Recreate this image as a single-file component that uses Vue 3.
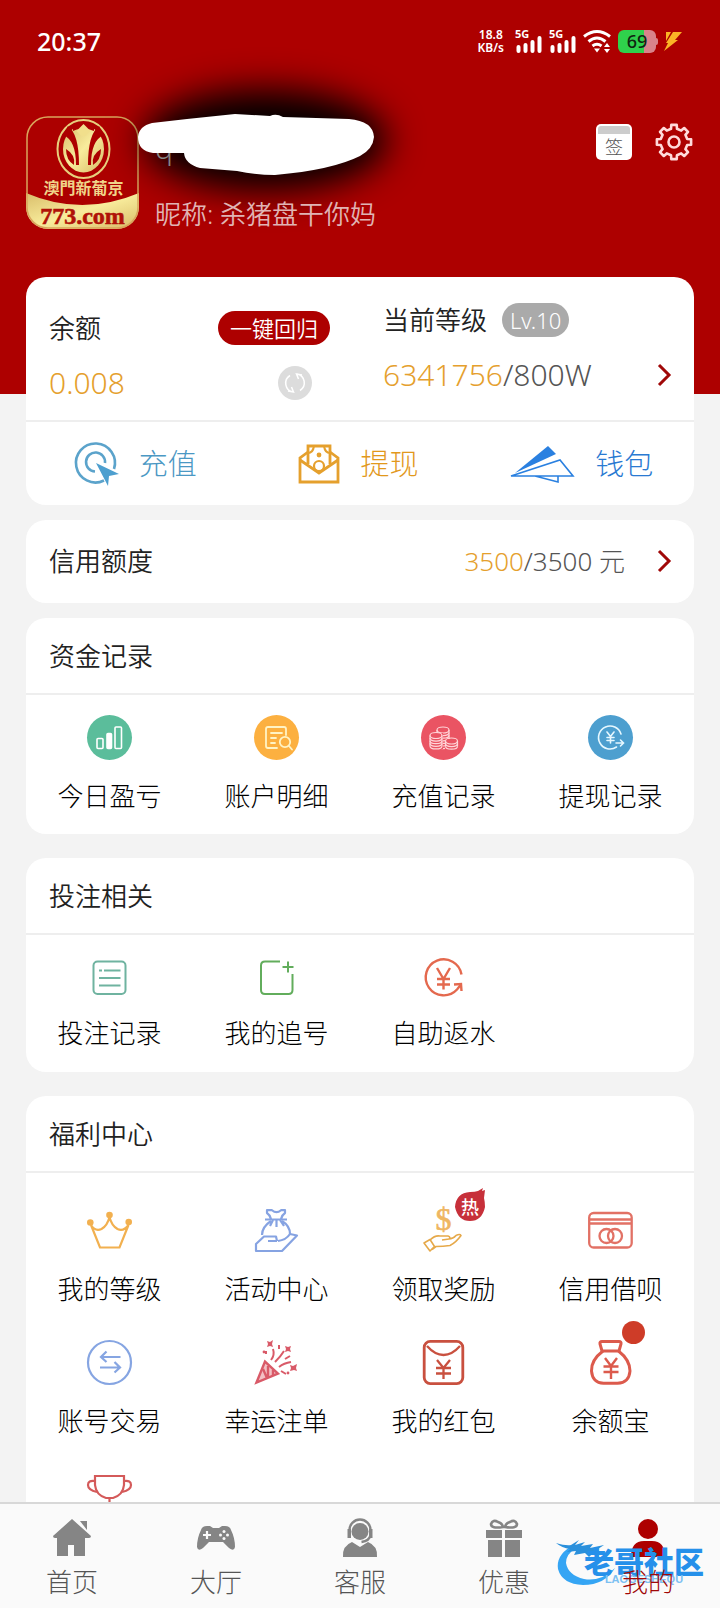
<script setup>
const gear = (() => {
  const pts = []
  const at = (deg, r) => {
    const a = (deg * Math.PI) / 180
    pts.push(`${(19 + r * Math.sin(a)).toFixed(1)} ${(19 - r * Math.cos(a)).toFixed(1)}`)
  }
  for (let i = 0; i < 8; i++) {
    const d = i * 45
    at(d - 13, 13.5)
    at(d - 9, 17.3)
    at(d + 9, 17.3)
    at(d + 13, 13.5)
  }
  return `M${pts.join('L')}Z`
})()

const coin = (x, y, n) => {
  let s = `<ellipse cx="${x}" cy="${y}" rx="6" ry="3"/>`
  for (let i = 1; i <= n; i++) s += `<path d="M${x - 6} ${y + i * 2.6}c0 4 12 4 12 0"/>`
  return s + `<path d="M${x - 6} ${y}v${n * 2.6}M${x + 6} ${y}v${n * 2.6}"/>`
}

const icons = {
  profit: `<circle cx="22.5" cy="22.5" r="22.5" fill="#5bbd9b"/><g fill="none" stroke="#fff" stroke-width="1.6"><rect x="10" y="23.5" width="6" height="10" rx="1"/><rect x="20" y="18.5" width="4.500" height="15" rx="1" fill="#fff"/><rect x="28" y="12" width="6.500" height="21.500" rx="1"/></g>`,
  detail: `<circle cx="22.5" cy="22.5" r="22.5" fill="#fcb040"/><g fill="none" stroke="#fff3c4" stroke-width="1.8" stroke-linecap="round"><path d="M32 20v-6q0-2-2-2H14q-2 0-2 2v17q0 2 2 2h9"/><path d="M17 18h11M17 23h5M17 28h4"/><circle cx="31" cy="27" r="5.200"/><path d="M35 31l3 3.500"/></g>`,
  recharge: `<circle cx="22.5" cy="22.5" r="22.5" fill="#ea5463"/><g fill="none" stroke="#ffd5d8" stroke-width="1.2">${coin(22, 15, 6)}<path fill="#ea5463" stroke="none" d="M8 18h14v16H8zM24 24h13v10H24z"/>${coin(15, 20.5, 4)}${coin(30.5, 26, 2)}</g>`,
  withdraw: `<circle cx="22.5" cy="22.5" r="22.5" fill="#4d9fcf"/><g fill="none" stroke="#e6f8ff" stroke-width="1.600" stroke-linecap="round"><path d="M33 19a11.500 11.500 0 1 0-4.500 13"/><path d="M19 17l3.500 4.500L26 17M19 22.500h7M19 25.500h7M22.500 21.500V28"/><path d="M28 28h7.500M32.500 25l3 3-3 3"/></g>`,
  list: `<g fill="none" stroke="#6fb3a0" stroke-width="2"><rect x="6.500" y="6.500" width="32" height="32.500" rx="4"/><path d="M12 15.500h3M17 15.500h16.500M12 23h21.500M12 30.500h21.500"/></g>`,
  chase: `<g fill="none" stroke="#62ad5c" stroke-width="2"><path d="M26 6.500H11q-4 0-4 4V35q0 4 4 4h23.500q4 0 4-4V19"/><path d="M28.500 12h11M34 6.500v11"/></g>`,
  rebate: `<g fill="none" stroke="#e4694e" stroke-width="2.400"><path d="M40.500 19.500A18 18 0 1 0 36 34.500l4-5"/><path d="M33 29.500l7-.5.500 7"/><path d="M16 13l6.500 11L29 13M16 24h13M16 29.500h13M22.500 24v10.500"/></g>`,
  crown: `<g fill="none" stroke="#f2b04f" stroke-width="2.200"><path d="M4 17l9 22.500h19.500L41.500 17q-5 7-11 4-6-3.500-8-12-2 8.500-8 12-6 3-10.500-4z"/></g><g fill="#f2b04f"><circle cx="3.300" cy="14.500" r="3.300"/><circle cx="22.500" cy="7" r="3.300"/><circle cx="41.700" cy="14" r="3.300"/></g>`,
  activity: `<g fill="none" stroke="#86a3e2" stroke-width="2.200" stroke-linejoin="round"><path d="M17 11q-1-4-4-6V2.200h5q4.500 4 9 0h4V5q-3 2-4 6M11 11.500h22"/><path d="M17 13q-9 6-9 14M28 13q8 5 8 13M19 12l-3 6M22.500 12v7M26 12l4 6"/><path d="M23 33h-9M23 33l-1-4.500H10L2 36v7h26l15-15.500-7-1.500q-4 6-12 7"/></g>`,
  reward: `<text x="22.500" y="22" text-anchor="middle" font-family="Liberation Serif, serif" font-size="32" font-weight="400" fill="#efb662" stroke="#efb662" stroke-width=".6">$</text><g fill="none" stroke="#e6a94a" stroke-width="1.600" stroke-linejoin="round"><path d="M9 32q5-5 10-4h8q3 1 1 3l-7 1M28 31q4 0 7-3.500 4-2 5 0-5 7-11 10-7 1-14 1l-4 3"/><path d="M3 35l6-3.500 4.500 7L9 43z"/></g>`,
  credit: `<g fill="none" stroke="#e27165" stroke-width="2.300"><rect x="1.200" y="5" width="42.500" height="34.500" rx="4.500"/><path d="M1 11.500h43M1 15.500h43"/><circle cx="18.500" cy="28" r="7"/><circle cx="27" cy="28" r="7"/></g>`,
  trade: `<g fill="none" stroke="#86a5e2" stroke-width="2.200"><circle cx="22.500" cy="22.500" r="21.500"/><path d="M33.500 17H14M19.500 11.500L14 17l5.500 5M13 27.500h20M27.500 22l5.500 5.500-5.500 5"/></g>`,
  lucky: `<g fill="none" stroke="#d95a68" stroke-width="2.400"><path d="M2.500 42.500L11 21.500 24 33.500z" fill="#f3c0c5"/><path d="M9 29l4 9M14 26v12M19 30v6"/><path stroke-width="2" d="M17 20q4-5 2-11M21 22q6-6 9-11M25 27q5-4 12-5M12 14v-3M25 9v-4M31 19l5-3M27 31l5 3"/></g><g fill="#d95a68"><path d="M13 1l3 1 3-2-1 4 1 3-3-1-3 1 1-3zM31 6l3 1 3-1-1 3 1 3-3-1-3 1 1-3zM36 25l3 1 4-2-1 4 1 3-3-1-4 1 1-3z"/><circle cx="10" cy="12" r="1.400"/><circle cx="34" cy="33" r="1.400"/></g>`,
  packet: `<g fill="none" stroke="#c9503f" stroke-width="2.800"><rect x="3.200" y="1.400" width="38.600" height="42.200" rx="6"/><path stroke-width="2.300" d="M6 6q8 9 16.500 9T39 6"/><path stroke-width="2.300" d="M16 20l6.500 8L29 20M15 28h15M15 33.500h15M22.500 28v11"/></g>`,
  savings: `<g fill="none" stroke="#dc5a4c" stroke-width="3"><path d="M14 11L12 4q-.5-2.500 2-2.500h17q2.500 0 2 2.500l-2 7z"/><path d="M15 11Q3 20 3.500 31q1 12 12 12.300h14Q41 43 42 31q0-11-11.500-20"/><path stroke-width="2.400" d="M17 18l6 8 6-8M15.500 26.500h15M15.500 32h15M23 26v13"/></g>`,
  trophy: `<g fill="none" stroke="#d45a5a" stroke-width="2.200"><path d="M8 4h29v9q-1 10-11 13h-7Q9 23 8 13z"/><path d="M8 9q-7-1-7 4t9 7M37 9q7-1 7 4t-9 7M22.500 26v14M13 41h19"/></g>`,
  home: `<path d="M19 0L0 17q0 2 2 2h2v18h11V26h6v11h11V19h4q2 0 2-2z"/><path d="M27 2h7v9z"/>`,
  hall: `<path d="M10 7h3l3 2h6l3-2h3q5 0 6 4 4 8 4 17-1 5-6 1l-6-6H12l-6 6q-5 4-6-1 0-9 4-17 1-4 6-4z"/><path d="M10 12v8M6 16h8" stroke="#fafafa" stroke-width="2.200"/><g fill="#fafafa"><circle cx="27" cy="12.500" r="1.500"/><circle cx="27" cy="19.500" r="1.500"/><circle cx="23.500" cy="16" r="1.500"/><circle cx="30.500" cy="16" r="1.500"/></g>`,
  service: `<circle cx="19" cy="12.500" r="8.500"/><path d="M8.500 16v-5a10.500 10.500 0 0 1 21 0v5q-1 6-9 7" fill="none" stroke="#858585" stroke-width="2.400"/><path d="M6.500 10h3.500v9H6.500zM28 10h3.500v9H28z"/><path d="M2 38q-1-11 9-15l8 5 8-5q10 4 9 15z"/>`,
  gift: `<path d="M1 11h16v8H1zM20 11h17v8H20zM3 21h14v17H3zM20 21h15v17H20z"/><g fill="none" stroke="#858585" stroke-width="2.600"><path d="M18 8Q6 10 6 5q2-5 7-2 4 1 5 5zM20 8q12 2 12-3-2-5-7-2-4 1-5 5z"/></g>`,
  mine: `<circle cx="19" cy="10" r="10"/><path d="M2 38q0-16 13-16h8q13 0 13 16z"/>`
}

const funds = [
  ['profit', '今日盈亏'],
  ['detail', '账户明细'],
  ['recharge', '充值记录'],
  ['withdraw', '提现记录']
]
const bets = [
  ['list', '投注记录'],
  ['chase', '我的追号'],
  ['rebate', '自助返水']
]
const welfare = [
  ['crown', '我的等级'],
  ['activity', '活动中心'],
  ['reward', '领取奖励'],
  ['credit', '信用借呗'],
  ['trade', '账号交易'],
  ['lucky', '幸运注单'],
  ['packet', '我的红包'],
  ['savings', '余额宝'],
  ['trophy', '']
]
const tabs = [
  ['home', '首页'],
  ['hall', '大厅'],
  ['service', '客服'],
  ['gift', '优惠'],
  ['mine', '我的']
]
</script>

<template>
  <div class="page">
    <main class="content">
      <header class="hero">
        <div class="status">
          <span class="clock">20:37</span>
          <div class="signals">
            <span class="speed">18.8<br />KB/s</span>
            <svg v-for="n in 2" :key="n" class="bars" viewBox="0 0 27 24" width="27" height="24">
              <text x="0" y="9" font-size="11" font-weight="700" fill="#fff">5G</text>
              <path d="M3.500 18v4M10.500 16v6M17.500 13v9M24.500 9v13" stroke="#fff" stroke-width="4" stroke-linecap="round" />
            </svg>
            <svg class="wifi" viewBox="0 0 28 24" width="28" height="24" fill="none" stroke="#fff" stroke-width="3">
              <path d="M1 7.500q13-10 26 0M5.500 12.500q8.500-7 17 0M9.500 17q4.500-3.500 9 0" />
              <path d="M11 19.500h6l-3 4zM21 18l3-4 3 4zM21 20l3 4 3-4z" fill="#fff" stroke="none" />
            </svg>
            <span class="battery"><b>69</b></span>
            <svg class="bolt" viewBox="0 0 20 20" width="20" height="20" fill="#fbb426">
              <path d="M3 1h5L3 10zM10 1h9l-7 8h3L1 20l4-8H3z" />
            </svg>
          </div>
        </div>
        <div class="profile">
          <svg class="glow" viewBox="0 0 240 64" width="240" height="64">
            <ellipse cx="128" cy="28" rx="122" ry="50" />
          </svg>
          <svg class="avatar" viewBox="0 0 113 113" width="113" height="113" role="img" aria-label="澳門新葡京 773.com">
            <defs>
              <linearGradient id="gold" x1="0" y1="0" x2="1" y2="1">
                <stop offset="0" stop-color="#d9bd6a" />
                <stop offset=".5" stop-color="#f8ec9c" />
                <stop offset="1" stop-color="#d8ba66" />
              </linearGradient>
              <clipPath id="tile"><rect width="113" height="113" rx="22" /></clipPath>
            </defs>
            <g clip-path="url(#tile)">
              <rect width="113" height="113" fill="#ac0000" />
              <path d="M0 77q56 24 113 0v36H0z" fill="url(#gold)" />
            </g>
            <rect x="1" y="1" width="111" height="111" rx="21" fill="none" stroke="#d9a55c" stroke-width="1.500" />
            <ellipse cx="57.500" cy="33" rx="26" ry="29" fill="none" stroke="#e7cf7d" stroke-width="2" />
            <ellipse cx="57.500" cy="33" rx="20.500" ry="23.500" fill="url(#gold)" />
            <path d="M42 10q11 8 11 39h-3Q50 24 37 19zM73 10Q62 18 62 49h3q0-25 13-30z" fill="#ac0000" />
            <path d="M40 33q10 6 8 16-8-5-8-16zM75 33q-10 6-8 16 8-5 8-16z" fill="#ac0000" />
            <path d="M47 8h21v7q-5-2-7-2l-3.500-5-3.500 5q-3 0-7 2z" fill="#ac0000" />
            <path d="M57.500 8l7 7-5 5h-4l-5-5z" fill="#f1df8c" />
            <text x="57.500" y="78" text-anchor="middle" font-family="Noto Sans CJK TC, sans-serif" font-size="16" font-weight="700" fill="#f0d489">澳門新葡京</text>
            <text x="56.500" y="108" text-anchor="middle" font-family="Liberation Serif, serif" font-size="24" font-weight="700" fill="#b01208" stroke="#b01208" stroke-width=".6">773.com</text>
          </svg>
          <div class="names">
            <span class="account-name">q</span>
            <span>昵称: 杀猪盘干你妈</span>
          </div>
          <div class="actions">
            <button class="plain" aria-label="签到">
              <svg viewBox="0 0 36 36" width="36" height="36">
                <rect width="36" height="36" rx="5" fill="#fff" />
                <path d="M2 10V5q0-3 3-3h26q3 0 3 3v5z" fill="#ccc" />
                <text x="18" y="30" text-anchor="middle" font-size="18" font-weight="300" fill="#555">签</text>
              </svg>
            </button>
            <button class="plain" aria-label="设置">
              <svg viewBox="0 0 38 38" width="38" height="38" fill="none" stroke="#ffdada" stroke-width="2.600" stroke-linejoin="round">
                <path :d="gear" />
                <circle cx="19" cy="19" r="5.500" />
              </svg>
            </button>
          </div>
          <svg class="scribble" viewBox="0 0 240 64" width="240" height="64">
            <path d="M1 24Q2 13 15 10L50 6 98 1l35 2q6-3 13 1l66 2q24 2 25 18-1 12-14 19-28 14-85 19-20 0-38-4l-37-3Q48 51 47 40H16Q1 38 1 24z" fill="#fff" />
          </svg>
        </div>
      </header>

      <section class="card account">
        <div class="summary">
          <div class="balance">
            <div class="line">
              <span>余额</span>
              <button class="recall">一键回归</button>
            </div>
            <div class="line">
              <span class="amount gold">0.008</span>
              <button class="plain refresh" aria-label="刷新">
                <svg viewBox="0 0 34 34" width="34" height="34" fill="none" stroke="#fff" stroke-width="1.500">
                  <circle cx="17" cy="17" r="17" fill="#dcdcdc" stroke="none" />
                  <path d="M15 26a9 9 0 0 1-3-16.500M19 8a9 9 0 0 1 3 16.500M10 25l5.500 1-2-5M24 9l-5.500-1 2 5" />
                </svg>
              </button>
            </div>
          </div>
          <div class="level">
            <div class="line"><span>当前等级</span><span class="badge">Lv.10</span></div>
            <div class="line">
              <span class="amount"><span class="gold">6341756</span>/800W</span>
              <svg class="chevron" viewBox="0 0 14 22" width="14" height="22"><path d="M2 1l10 10L2 21" /></svg>
            </div>
          </div>
        </div>
        <nav class="wallet">
          <a href="#recharge" class="w-recharge">
            <svg viewBox="0 0 44 44" width="44" height="44" fill="none" stroke="#5ba3cb" stroke-width="2.600">
              <path d="M29 38.500A19.500 19.500 0 1 1 39 27" />
              <path d="M20 29.500A9.500 9.500 0 1 1 30 21" />
              <path d="M21 21l23 11-10 2-1 10z" fill="#4d9fcf" stroke="none" />
            </svg>充值
          </a>
          <a href="#withdraw" class="w-withdraw">
            <svg viewBox="0 0 42 40" width="42" height="40" fill="none" stroke="#e5a02d" stroke-width="2.800">
              <path d="M10 8L2 14v24h38V14l-8-6" />
              <path d="M10 20V2h22v18M2 16l19 13 19-13" />
              <path d="M10 9q5 0 6-7M32 9q-5 0-6-7" stroke-width="2" />
              <circle cx="21" cy="22" r="5" stroke-width="2.200" />
              <circle cx="21" cy="11" r="2.400" fill="#e5a02d" stroke="none" />
            </svg>提现
          </a>
          <a href="#wallet" class="w-wallet">
            <svg viewBox="0 0 66 38" width="66" height="38">
              <path d="M6 28L39 1l8 8z" fill="#2a80e0" />
              <path d="M2 31L51 15l13 16zM26 31l23 6v-6" fill="none" stroke="#2a80e0" stroke-width="1.600" />
            </svg>钱包
          </a>
        </nav>
      </section>

      <section class="card quota">
        <span>信用额度</span>
        <span class="quota-value"><span class="gold">3500</span>/3500 元</span>
        <svg class="chevron" viewBox="0 0 14 22" width="14" height="22"><path d="M2 1l10 10L2 21" /></svg>
      </section>

      <section class="card">
        <h2>资金记录</h2>
        <div class="grid">
          <button v-for="[icon, label] in funds" :key="icon" class="cell">
            <svg viewBox="0 0 45 45" width="45" height="45" v-html="icons[icon]"></svg>
            <span>{{ label }}</span>
          </button>
        </div>
      </section>

      <section class="card spaced">
        <h2>投注相关</h2>
        <div class="grid tight">
          <button v-for="[icon, label] in bets" :key="icon" class="cell">
            <svg viewBox="0 0 45 45" width="45" height="45" v-html="icons[icon]"></svg>
            <span>{{ label }}</span>
          </button>
        </div>
      </section>

      <section class="card spaced">
        <h2>福利中心</h2>
        <div class="grid roomy">
          <button v-for="[icon, label] in welfare" :key="icon" class="cell" :aria-label="label || '奖杯'">
            <svg viewBox="0 0 45 45" width="45" height="45" v-html="icons[icon]"></svg>
            <span>{{ label }}</span>
            <svg v-if="icon === 'reward'" class="hot" viewBox="0 0 32 34" width="32" height="34">
              <path d="M15 4q5 0 8-1l5-3-1 3 3-1-1 8q1 4 1 9-3 14-15 14T0 19Q1 5 15 4z" fill="#c7303a" />
              <text x="15" y="26" text-anchor="middle" font-size="18" font-weight="500" fill="#fff">热</text>
            </svg>
            <i v-if="icon === 'savings'" class="dot"></i>
          </button>
        </div>
      </section>
    </main>

    <nav class="tabs">
      <a v-for="[icon, label] in tabs" :key="icon" :href="'#' + icon" :class="{ active: icon === 'mine' }">
        <svg viewBox="0 0 38 38" width="38" height="38" v-html="icons[icon]"></svg>
        <span>{{ label }}</span>
      </a>
      <div class="watermark">
        <svg viewBox="0 0 62 50" width="62" height="50">
          <path d="M14 9Q0 18 2 31q4 15 25 16 22 0 32-17-14 14-31 11Q12 37 10 25q0-9 10-15z" fill="#35a5f4" />
          <path d="M0 5q10 3 15 2l8-5-4 5 10-3-4 4 12-2-3 4 14-3-9 6 9 1-12 2-3 3-4-4-11 2 2-4-9 1 3-3Q6 10 0 5z" fill="#2a90dc" />
        </svg>
        <div class="mark-text"><strong>老哥社区</strong><small>LAOGESHEQU</small></div>
      </div>
    </nav>
  </div>
</template>

<style>
body {
  background: #f3f3f3;
}
</style>

<style scoped>
.page {
  height: 100vh;
  display: flex;
  flex-direction: column;
  font: 350 26px/36px "Noto Sans", "Noto Sans CJK SC", sans-serif;
  color: #222;
  background: #f3f3f3;
}
.content {
  flex: 1;
  min-height: 0;
  overflow-y: auto;
  scrollbar-width: none;
}
button {
  font: inherit;
  color: inherit;
  border: 0;
  padding: 0;
  background: none;
}
a {
  color: inherit;
  text-decoration: none;
}
svg {
  display: block;
  flex: none;
  overflow: visible;
}
.hero {
  background: #ad0000;
  color: #e0b4b4;
  padding-bottom: 165px;
}
.status {
  box-sizing: border-box;
  height: 84px;
  display: flex;
  align-items: center;
  justify-content: space-between;
  padding: 0 37px 2px;
  color: #fff;
}
.clock {
  font-weight: 500;
  font-size: 25px;
}
.signals {
  display: flex;
  align-items: center;
  gap: 7px;
}
.speed {
  font-size: 12px;
  line-height: 13px;
  font-weight: 600;
  text-align: center;
  margin-right: 4px;
}
.battery {
  position: relative;
  width: 38px;
  height: 23px;
  border-radius: 6px;
  background: linear-gradient(90deg, #2fd14c 68%, #d9838a 68%);
  color: #102510;
  text-align: center;
  font-size: 18px;
  line-height: 23px;
}
.battery::after {
  content: "";
  position: absolute;
  left: 100%;
  top: 8px;
  width: 2px;
  height: 7px;
  border-radius: 0 2px 2px 0;
  background: #d9838a;
}
.battery b {
  font-weight: 500;
}
.profile {
  position: relative;
  display: flex;
  align-items: flex-start;
  gap: 16px;
  padding: 32px 27px 0 26px;
}
.names {
  position: relative;
  flex: 1;
  display: flex;
  flex-direction: column;
  gap: 36px;
  padding-top: 17px;
  line-height: 30px;
}
.account-name {
  font-size: 30px;
  color: #888;
}
.actions {
  position: relative;
  display: flex;
  align-items: center;
  gap: 23px;
  padding-top: 7px;
}
.scribble,
.glow {
  position: absolute;
  left: 137px;
  top: 28px;
  pointer-events: none;
}
.scribble {
  top: 29px;
}
.glow {
  filter: blur(18px);
}
.card {
  margin: 15px 26px 0;
  border-radius: 20px;
  background: #fff;
}
.card.spaced {
  margin-top: 24px;
}
.card.account {
  position: relative;
  margin-top: -117px;
}
.summary {
  display: grid;
  grid-template-columns: 334px 1fr;
  padding: 25px 23px 19px;
  border-bottom: 2px solid #eee;
}
.line {
  display: flex;
  align-items: center;
  justify-content: space-between;
}
.balance {
  padding: 8px 53px 0 0;
}
.balance .line + .line,
.level .line + .line {
  margin-top: 19px;
}
.recall {
  height: 34px;
  padding: 0 12px;
  border-radius: 17px;
  background: #ad0000;
  color: #fff;
  font-size: 22px;
  line-height: 34px;
}
.refresh {
  margin-right: 18px;
}
.level .line:first-child {
  justify-content: flex-start;
  gap: 15px;
}
.badge {
  padding: 0 8px;
  border-radius: 17px;
  background: #aaa;
  color: #fff;
  font-size: 22px;
  line-height: 34px;
}
.amount {
  font-size: 30px;
  font-weight: 300;
  color: #555;
}
.gold,
.amount.gold {
  color: #e5a02d;
}
.chevron {
  fill: none;
  stroke: #a00808;
  stroke-width: 3;
}
.wallet {
  display: grid;
  grid-template-columns: repeat(3, 1fr);
  height: 83px;
}
.wallet a {
  display: flex;
  align-items: center;
  justify-content: center;
  gap: 20px;
  padding-right: 3px;
  font-size: 29px;
  font-weight: 300;
}
.w-recharge {
  color: #4b98c4;
}
.w-withdraw {
  color: #e2981c;
}
.w-wallet {
  color: #2a7ad2;
}
.quota {
  display: flex;
  align-items: center;
  padding: 23px 23px 24px;
}
.quota-value {
  margin-left: auto;
  margin-right: 32px;
  font-weight: 300;
  color: #555;
}
h2 {
  margin: 0;
  padding: 20px 23px 19px;
  font: inherit;
  border-bottom: 2px solid #eee;
}
.grid {
  display: grid;
  grid-template-columns: repeat(4, 1fr);
  padding: 20px 0;
}
.cell {
  position: relative;
  display: flex;
  flex-direction: column;
  align-items: center;
  gap: 18px;
  font-weight: 300;
  color: #000;
}
.tight {
  padding-bottom: 21px;
}
.tight .cell {
  gap: 15px;
}
.roomy {
  padding-top: 35px;
  row-gap: 33px;
}
.cell span {
  min-height: 36px;
}
.hot {
  position: absolute;
  left: calc(50% + 11px);
  top: -20px;
}
.dot {
  position: absolute;
  left: calc(50% + 11px);
  top: -19px;
  width: 23px;
  height: 23px;
  border-radius: 50%;
  background: #ce3c28;
}
.tabs {
  position: relative;
  display: grid;
  grid-template-columns: repeat(5, 1fr);
  border-top: 2px solid #d8d8d8;
  background: #fafafa;
  color: #555;
  font-weight: 300;
}
.tabs a {
  display: flex;
  flex-direction: column;
  align-items: center;
  gap: 7px;
  padding: 15px 0 8px;
  fill: #858585;
}
.tabs a span {
  position: relative;
  z-index: 1;
}
.tabs a.active {
  color: #a00808;
  fill: #ad0000;
}
.watermark {
  position: absolute;
  right: 16px;
  top: 34px;
  display: flex;
  color: #2590ea;
  pointer-events: none;
}
.mark-text {
  margin-left: -34px;
  display: flex;
  flex-direction: column;
  align-items: center;
  padding-top: 12px;
}
.mark-text strong {
  font-weight: 900;
  font-size: 30px;
  line-height: 24px;
}
.mark-text small {
  font: 700 11px/10px "Liberation Sans", sans-serif;
  color: #7cc0f2;
}
</style>
